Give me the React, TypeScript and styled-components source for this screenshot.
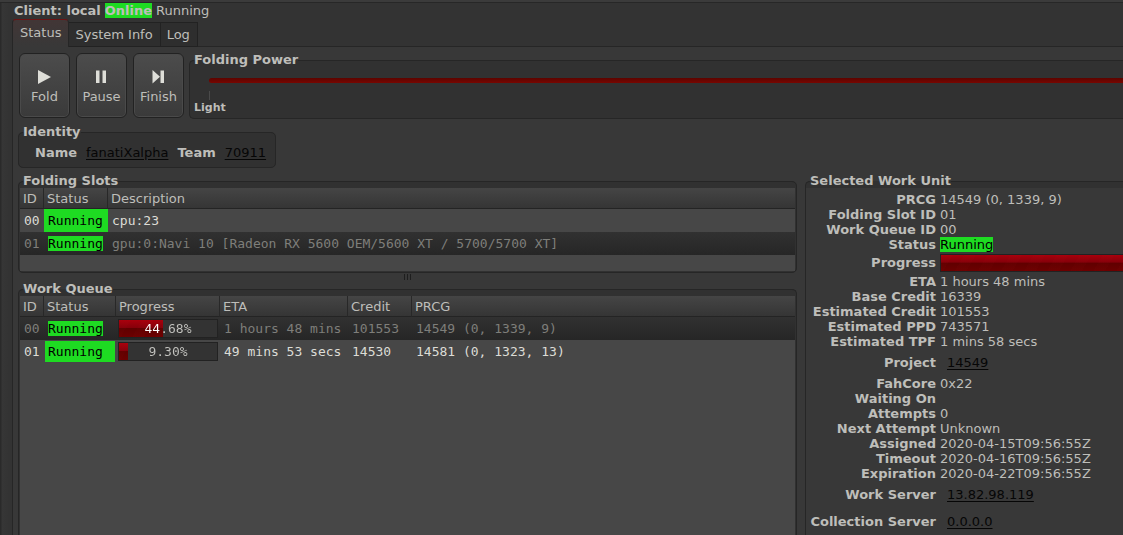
import React from "react";
import styled, { createGlobalStyle, css } from "styled-components";

const GlobalStyle = createGlobalStyle`
  * { box-sizing: border-box; }
  body {
    margin: 0;
    background: #333333;
    color: #bebeba;
    font: 13px/15px "DejaVu Sans", sans-serif;
  }
`;

const Window = styled.div`
  display: flex;
  flex-direction: column;
  min-height: 100vh;
  padding-left: 12px;
  overflow: hidden;
  background: linear-gradient(90deg, #2a2a2a 1px, #363636 2px, #333333 9px, #333333 12px);
  border-top: 2px solid #3b3b3b;
`;

const ClientBar = styled.header`
  display: flex;
  gap: 4px;
  padding: 0 2px 1px 14px;
  margin-left: -12px;
  border-top: 1px solid #272727;
`;

const Flag = styled.span`
  background: #1edb22;
  color: #bebeba;
  font-weight: bold;
`;

const Tabs = styled.nav`
  display: flex;
  align-items: flex-end;
  position: relative;
  z-index: 1;
  margin-bottom: -1px;
`;

const Tab = styled.button<{ $active?: boolean }>`
  height: 25px;
  padding: 0 7px 0 6px;
  border: 1px solid #222222;
  border-left: 0;
  background: #2e2e2e;
  color: inherit;
  font: inherit;
  ${(p) =>
    p.$active &&
    css`
      height: 28px;
      padding: 0 7px 3px;
      border: 1px solid #262626;
      border-top-color: #6b1414;
      border-bottom: 0;
      border-radius: 4px 4px 0 0;
      background: linear-gradient(#423636, #383838);
    `}
`;

const Notebook = styled.main`
  flex: 1;
  display: flex;
  flex-direction: column;
  padding: 6px 0 0 5px;
  border: solid #262626;
  border-width: 1px 0 0 1px;
  background: #383838;
`;

const Toolbar = styled.div`
  display: flex;
  gap: 6px;
  padding-left: 1px;
  height: 66px;
`;

const ToolButton = styled.button`
  display: flex;
  flex-direction: column;
  align-items: center;
  width: 51px;
  height: 65px;
  padding: 14px 0 0;
  gap: 5px;
  border: 1px solid #222222;
  border-radius: 6px;
  background: linear-gradient(#4c4c4c, #3a3a3a);
  box-shadow: inset 0 0 0 1px #4a4a4a;
  color: inherit;
  font: inherit;
`;

const Frame = styled.fieldset<{ $open?: boolean; $grow?: boolean }>`
  display: flex;
  flex-direction: column;
  min-width: 0;
  margin: 0;
  padding: 0 1px 1px;
  border: 1px solid #262626;
  border-radius: 5px;
  background: #313131;
  ${(p) =>
    p.$grow &&
    css`
      flex: 1;
      padding-bottom: 0;
      border-bottom: 0;
      border-radius: 5px 5px 0 0;
    `}
  ${(p) =>
    p.$open &&
    css`
      flex: 1;
      padding: 0 0 0 1px;
      border-right: 0;
      border-bottom: 0;
      border-radius: 5px 0 0 0;
    `}
`;

const PowerFrame = styled(Frame)`
  flex: 1;
  margin-left: -1px;
  padding: 0 0 0 1px;
  border-right: 0;
  border-radius: 5px 0 0 5px;
`;

const Legend = styled.legend`
  margin-left: 3px;
  padding: 0;
  height: 14px;
  line-height: 14px;
  font-weight: bold;
`;

const PowerSlider = styled.input`
  appearance: none;
  display: block;
  width: calc(100% - 18px);
  height: 5px;
  margin: 11px 0 8px 18px;
  border-radius: 3px 0 0 3px;
  background: linear-gradient(#5c0400, #780600);
  &::-webkit-slider-thumb {
    appearance: none;
    width: 1px;
    height: 5px;
    background: transparent;
  }
`;

const Tick = styled.div`
  width: 1px;
  height: 9px;
  margin-left: 18px;
  background: #4a4a4a;
`;

const ScaleLabel = styled.div`
  padding-left: 3px;
  font-size: 11px;
  line-height: 16px;
  font-weight: bold;
`;

const IdentityFrame = styled(Frame)`
  align-self: flex-start;
  margin-top: 6px;
`;

const IdentityRow = styled.div`
  display: flex;
  gap: 9px;
  padding: 6px 8px 6px 15px;
`;

const Link = styled.a`
  color: #060606;
  text-decoration: underline;
  text-underline-offset: 2px;
`;

const Panes = styled.div`
  flex: 1;
  display: grid;
  grid-template-columns: minmax(0, 1fr) 318px;
  gap: 8px;
  margin-top: 6px;
`;

const LeftPane = styled.div`
  display: flex;
  flex-direction: column;
`;

const Grip = styled.div`
  display: flex;
  justify-content: center;
  gap: 2px;
  height: 9px;
  padding: 1px 0 2px;
  span {
    width: 1px;
    background: #1e1e1e;
  }
`;

const ListBox = styled.div<{ $height?: number }>`
  ${(p) => (p.$height ? `height: ${p.$height}px;` : "flex: 1;")}
  overflow: hidden;
  background: #474747;
`;

const List = styled.table`
  width: 100%;
  table-layout: fixed;
  border-collapse: separate;
  border-spacing: 0;
`;

const Head = styled.th<{ $width?: number }>`
  ${(p) => p.$width && `width: ${p.$width}px;`}
  height: 21px;
  padding: 0 3px;
  border-right: 1px solid #282828;
  border-bottom: 1px solid #242424;
  background: linear-gradient(#454545, #353535);
  text-align: left;
  font-weight: normal;
  &:last-child { border-right: 0; }
`;

const Row = styled.tr<{ $selected?: boolean }>`
  height: 23px;
  font-family: "DejaVu Sans Mono", monospace;
  color: ${(p) => (p.$selected ? "#7e7e7a" : "#dcdcd6")};
  background: ${(p) => (p.$selected ? "linear-gradient(#313131, #262626)" : "#474747")};
`;

const Cell = styled.td`
  padding: 0 4px;
  white-space: pre;
`;

const StatusCell = styled(Cell)<{ $fill?: boolean; $inset?: boolean }>`
  color: #000000;
  ${(p) => p.$fill && "background: #1edb22;"}
  ${(p) => p.$fill && p.$inset && "box-shadow: inset 0 0 0 1px #474747;"}
`;

const Running = styled.span`
  display: inline-block;
  height: 15px;
  background: #1edb22;
  color: #000000;
`;

const BarCell = styled(Cell)`
  padding: 0 2px;
`;

const Bar = styled.div`
  position: relative;
  height: 19px;
  border: 1px solid #222222;
  background: #333333;
  text-align: center;
  line-height: 17px;
`;

const BarFill = styled.div`
  position: absolute;
  inset: 0 auto 0 0;
  background:
    repeating-linear-gradient(120deg, rgba(255, 60, 60, 0.02) 0 10px, transparent 10px 20px),
    linear-gradient(#a8000c 0, #86000a 45%, #600000 50%, #6c0000 100%);
`;

const BarText = styled.span`
  position: relative;
  display: block;
  background-clip: text;
  color: transparent;
`;

const Details = styled.dl`
  flex: 1;
  display: grid;
  grid-template-columns: 130px minmax(0, 1fr);
  column-gap: 4px;
  align-content: start;
  margin: 0 0 0 -1px;
  padding-top: 4px;
  background: #383838;
`;

const Term = styled.dt<{ $height: number }>`
  height: ${(p) => p.$height}px;
  line-height: ${(p) => p.$height}px;
  font-weight: bold;
  text-align: right;
  white-space: nowrap;
`;

const Value = styled.dd<{ $height: number; $link?: boolean }>`
  display: flex;
  align-items: center;
  height: ${(p) => p.$height}px;
  margin: 0;
  padding-left: ${(p) => (p.$link ? 7 : 0)}px;
  white-space: nowrap;
`;

const WideBar = styled(Bar)`
  flex: 1;
  height: 18px;
  border-right: 0;
`;

const details: [string, string, ("status" | "bar" | "link")?][] = [
  ["PRCG", "14549 (0, 1339, 9)"],
  ["Folding Slot ID", "01"],
  ["Work Queue ID", "00"],
  ["Status", "Running", "status"],
  ["Progress", "", "bar"],
  ["ETA", "1 hours 48 mins"],
  ["Base Credit", "16339"],
  ["Estimated Credit", "101553"],
  ["Estimated PPD", "743571"],
  ["Estimated TPF", "1 mins 58 secs"],
  ["Project", "14549", "link"],
  ["FahCore", "0x22"],
  ["Waiting On", ""],
  ["Attempts", "0"],
  ["Next Attempt", "Unknown"],
  ["Assigned", "2020-04-15T09:56:55Z"],
  ["Timeout", "2020-04-16T09:56:55Z"],
  ["Expiration", "2020-04-22T09:56:55Z"],
  ["Work Server", "13.82.98.119", "link"],
  ["Collection Server", "0.0.0.0", "link"],
];

const slots = [
  { id: "00", description: "cpu:23", selected: false },
  { id: "01", description: "gpu:0:Navi 10 [Radeon RX 5600 OEM/5600 XT / 5700/5700 XT]", selected: true },
];

const queue = [
  { id: "00", progress: 44.68, eta: "1 hours 48 mins", credit: "101553", prcg: "14549 (0, 1339, 9)", selected: true },
  { id: "01", progress: 9.3, eta: "49 mins 53 secs", credit: "14530", prcg: "14581 (0, 1323, 13)", selected: false },
];

const Status = ({ selected, inset }: { selected: boolean; inset?: boolean }) => (
  <StatusCell $fill={!selected} $inset={inset}>
    <Running>Running</Running>
  </StatusCell>
);

const icons = {
  Fold: <path d="M2 2 L15 9 L2 16 Z" />,
  Pause: <path d="M3 2.5h3.5v12.5h-3.5z M9.5 2.5h3.5v12.5h-3.5z" />,
  Finish: <path d="M2.5 2 L10 8.8 L2.5 15.5 Z M10.5 2.5h3.5v12.5h-3.5z" />,
};

export default function App() {
  return (
    <>
      <GlobalStyle />
      <Window>
        <ClientBar>
          <b>Client: local</b>
          <Flag>Online</Flag>
          <span>Running</span>
        </ClientBar>
        <Tabs>
          <Tab $active>Status</Tab>
          <Tab>System Info</Tab>
          <Tab>Log</Tab>
        </Tabs>
        <Notebook>
          <Toolbar>
            {(Object.keys(icons) as (keyof typeof icons)[]).map((name) => (
              <ToolButton key={name}>
                <svg width="17" height="16" viewBox="0 0 17 16" fill="#deded8" aria-hidden="true">
                  {icons[name]}
                </svg>
                {name}
              </ToolButton>
            ))}
            <PowerFrame>
              <Legend id="power">Folding Power</Legend>
              <PowerSlider type="range" aria-labelledby="power" defaultValue={100} />
              <Tick />
              <ScaleLabel>Light</ScaleLabel>
            </PowerFrame>
          </Toolbar>
          <IdentityFrame>
            <Legend>Identity</Legend>
            <IdentityRow>
              <b>Name</b>
              <Link href="#name">fanatiXalpha</Link>
              <b>Team</b>
              <Link href="#team">70911</Link>
            </IdentityRow>
          </IdentityFrame>
          <Panes>
            <LeftPane>
              <Frame>
                <Legend>Folding Slots</Legend>
                <ListBox $height={83}>
                  <List>
                    <thead>
                      <tr>
                        <Head $width={24}>ID</Head>
                        <Head $width={64}>Status</Head>
                        <Head>Description</Head>
                      </tr>
                    </thead>
                    <tbody>
                      {slots.map((s) => (
                        <Row key={s.id} $selected={s.selected}>
                          <Cell>{s.id}</Cell>
                          <Status selected={s.selected} />
                          <Cell>{s.description}</Cell>
                        </Row>
                      ))}
                    </tbody>
                  </List>
                </ListBox>
              </Frame>
              <Grip>
                <span />
                <span />
                <span />
              </Grip>
              <Frame $grow>
                <Legend>Work Queue</Legend>
                <ListBox>
                  <List>
                    <thead>
                      <tr>
                        <Head $width={24}>ID</Head>
                        <Head $width={72}>Status</Head>
                        <Head $width={104}>Progress</Head>
                        <Head $width={128}>ETA</Head>
                        <Head $width={64}>Credit</Head>
                        <Head>PRCG</Head>
                      </tr>
                    </thead>
                    <tbody>
                      {queue.map((q) => (
                        <Row key={q.id} $selected={q.selected}>
                          <Cell>{q.id}</Cell>
                          <Status selected={q.selected} inset />
                          <BarCell>
                            <Bar>
                              <BarFill style={{ width: `${q.progress}%` }} />
                              <BarText
                                style={{
                                  backgroundImage: `linear-gradient(90deg, #ffffff ${q.progress}%, #c4c4c0 ${q.progress}%)`,
                                }}
                              >
                                {q.progress.toFixed(2)}%
                              </BarText>
                            </Bar>
                          </BarCell>
                          <Cell>{q.eta}</Cell>
                          <Cell>{q.credit}</Cell>
                          <Cell>{q.prcg}</Cell>
                        </Row>
                      ))}
                    </tbody>
                  </List>
                </ListBox>
              </Frame>
            </LeftPane>
            <Frame $open>
              <Legend>Selected Work Unit</Legend>
              <Details>
                {details.map(([label, value, kind]) => {
                  const height = kind === "link" ? 27 : kind === "bar" ? 22 : 15;
                  return (
                    <React.Fragment key={label}>
                      <Term $height={height}>{label}</Term>
                      <Value $height={height} $link={kind === "link"}>
                        {kind === "status" && <Running>{value}</Running>}
                        {kind === "link" && <Link href={`#${value}`}>{value}</Link>}
                        {kind === "bar" && (
                          <WideBar role="progressbar" aria-label="Progress">
                            <BarFill style={{ width: "100%" }} />
                          </WideBar>
                        )}
                        {!kind && value}
                      </Value>
                    </React.Fragment>
                  );
                })}
              </Details>
            </Frame>
          </Panes>
        </Notebook>
      </Window>
    </>
  );
}
